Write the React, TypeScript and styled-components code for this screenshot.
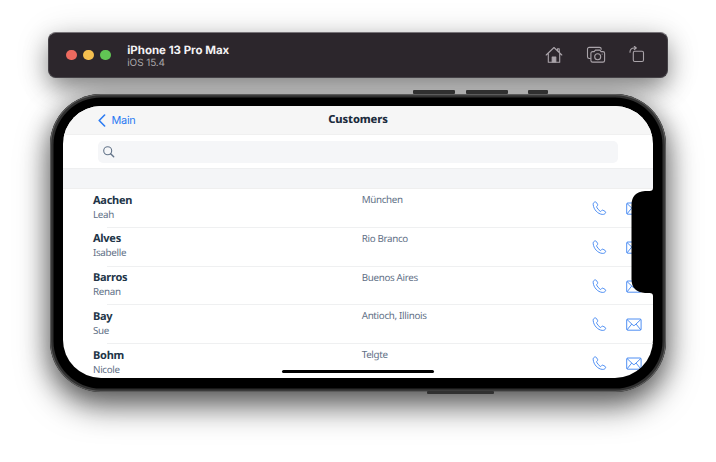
import React from 'react';
import styled, { createGlobalStyle } from 'styled-components';

const GlobalStyle = createGlobalStyle`
  * { box-sizing: border-box; }
  html, body { margin: 0; background: #fff; overflow: hidden; }
`;

const Desktop = styled.main`
  width: 716px;
  height: 462px;
  padding: 32px 48px 0;
  display: flex;
  flex-direction: column;
  align-items: center;
  gap: 15.5px;
  overflow: hidden;
  isolation: isolate;
  background: #fff;
  font-family: "Noto Sans", sans-serif;
  text-rendering: geometricPrecision;
`;

const TitleBar = styled.header`
  position: relative;
  width: 620px;
  height: 46px;
  flex: none;
  display: flex;
  align-items: center;
  padding: 0 22px 0 17px;
  border-radius: 8px;
  background: #2c262c;
  border: 1px solid #454247;
  border-top-color: #777378;
  &::before {
    content: '';
    position: absolute;
    inset: 0;
    z-index: -1;
    border-radius: 8px;
    box-shadow: 0 11px 24px rgba(0, 0, 0, 0.42), 0 4px 36px rgba(0, 0, 0, 0.16);
  }
`;

const Lights = styled.div`
  display: flex;
  gap: 6.6px;
  margin-right: 16.3px;
`;

const Light = styled.span<{ $color: string }>`
  width: 10.6px;
  height: 10.6px;
  border-radius: 50%;
  background: ${(p) => p.$color};
`;

const DeviceTitle = styled.div`
  flex: 1;
  padding-top: 2px;
  font-family: Inter, sans-serif;
`;

const DeviceName = styled.h1`
  margin: 0;
  font-size: 11.5px;
  line-height: 13px;
  font-weight: 700;
  letter-spacing: -0.02px;
  color: #f3f1f3;
`;

const DeviceOs = styled.p`
  margin: 0;
  font-size: 10px;
  line-height: 12px;
  letter-spacing: -0.1px;
  color: #aaa6aa;
`;

const Tools = styled.div`
  display: flex;
  align-items: center;
  gap: 23px;
  color: #aaa4aa;
  svg { display: block; }
`;

const Phone = styled.section`
  position: relative;
  width: 616px;
  height: 298px;
  flex: none;
  padding: 12.5px 13px 13px 13px;
  border-radius: 51px;
  background: #000;
  box-shadow:
    inset 0 0 0 1.2px #5c5c5c,
    inset 0 0 0 3.5px #303030;
  &::before {
    content: '';
    position: absolute;
    inset: 0;
    z-index: -1;
    border-radius: 51px;
    box-shadow: 0 14px 32px rgba(0, 0, 0, 0.58), 0 4px 24px rgba(0, 0, 0, 0.26);
  }
`;

const SideButton = styled.span<{ $left: number; $width: number; $bottom?: boolean }>`
  position: absolute;
  left: ${(p) => p.$left}px;
  ${(p) => (p.$bottom ? 'bottom: -2.8px;' : 'top: -3.2px;')}
  width: ${(p) => p.$width}px;
  height: 3.2px;
  border-radius: 1px;
  background: #303030;
`;

const Screen = styled.div`
  position: relative;
  width: 590px;
  height: 272px;
  overflow: hidden;
  border-radius: 38px;
  background: #fff;
`;

const NavBar = styled.nav`
  height: 29px;
  display: grid;
  grid-template-columns: 1fr auto 1fr;
  align-items: center;
  padding: 0 35px;
  background: #f6f6f6;
  border-bottom: 1px solid #f0f0f0;
`;

const BackLink = styled.a`
  display: flex;
  align-items: center;
  gap: 5.5px;
  font-family: Inter, sans-serif;
  font-size: 10.9px;
  letter-spacing: -0.25px;
  color: #2b7bf3;
`;

const PageTitle = styled.h2`
  margin: 0;
  font-size: 11.1px;
  line-height: 16px;
  padding-top: 0.8px;
  font-weight: 800;
  letter-spacing: -0.12px;
  color: #1d2d3e;
`;

const SearchArea = styled.div`
  height: 34px;
  padding: 5.5px 35px;
  border-bottom: 1px solid #eeeff0;
`;

const SearchField = styled.div`
  height: 22px;
  display: flex;
  align-items: center;
  padding-left: 5px;
  border-radius: 5px;
  background: #f5f6f8;
`;

const SectionGap = styled.div`
  height: 20px;
  background: #f4f5f7;
  border-bottom: 1px solid #efefef;
`;

const List = styled.ul`
  margin: 0;
  padding: 0;
  list-style: none;
`;

const Row = styled.li`
  height: 38.8px;
  display: grid;
  grid-template-columns: 268.7px 230px 34.2px 1fr;
  padding-left: 30px;
  background: linear-gradient(#eff0f1, #eff0f1) 44px 100% / 100% 1px no-repeat;
  svg { margin-top: 12px; display: block; }
`;

const Person = styled.div`
  padding-top: 4.5px;
`;

const LastName = styled.div`
  font-size: 11px;
  line-height: 14px;
  font-weight: 700;
  letter-spacing: -0.27px;
  color: #223548;
`;

const FirstName = styled.div`
  font-size: 9.8px;
  line-height: 13px;
  letter-spacing: -0.32px;
  color: #5f7086;
`;

const City = styled(FirstName)`
  padding-top: 4px;
`;

const Notch = styled.svg`
  position: absolute;
  right: 0;
  top: 81.7px;
`;

const HomeIndicator = styled.span`
  position: absolute;
  left: 219px;
  bottom: 5px;
  width: 152px;
  height: 3.2px;
  border-radius: 2px;
  background: #000;
`;

const HomeIcon = () => (
  <svg width="18" height="18" viewBox="0 0 18 18" fill="none" stroke="currentColor" strokeWidth="1.1" strokeLinecap="round" strokeLinejoin="round">
    <path d="M1.2 9 9 1.5 16.8 9M3.3 7.5v8.7h11.4V7.5M12.5 4.5V2.8h1.7v3.5" />
    <path d="M7.2 16v-5h3.6v5z" fill="currentColor" />
  </svg>
);

const CameraIcon = () => (
  <svg width="20" height="18" viewBox="0 0 20 18" fill="none" stroke="currentColor" strokeWidth="1.1" strokeLinejoin="round">
    <path d="M4.800 12.500H3.200A1.700 1.700 0 0 1 1.500 10.800V3.100a1.700 1.700 0 0 1 1.700-1.700h10.300a1.700 1.700 0 0 1 1.700 1.700v.7" />
    <path d="M6.600 5.600h1.600l1.200-1.500h4.500l1.200 1.500h1.800a1.700 1.700 0 0 1 1.700 1.700v7.100a1.700 1.700 0 0 1-1.700 1.700H6.600a1.700 1.700 0 0 1-1.700-1.700V7.300a1.700 1.700 0 0 1 1.700-1.700Z" />
    <circle cx="11.7" cy="10.7" r="3" />
    <circle cx="16.2" cy="8" r=".55" fill="currentColor" stroke="none" />
  </svg>
);

const RotateIcon = () => (
  <svg width="16" height="18" viewBox="0 0 16 18" fill="none" stroke="currentColor" strokeWidth="1.1" strokeLinejoin="round" strokeLinecap="round">
    <rect x="4.3" y="5.3" width="10.2" height="10.2" rx="1.4" />
    <path d="M1 6.200C.9 3.500 2.500 2 5.100 2H7M5.300.3 7.300 2 5.300 3.700" />
  </svg>
);

const BackIcon = () => (
  <svg width="8" height="13" viewBox="0 0 8 13" fill="none" stroke="currentColor" strokeWidth="1.6" strokeLinecap="round" strokeLinejoin="round">
    <path d="M6.600 1 1.200 6.500l5.400 5.500" />
  </svg>
);

const SearchIcon = () => (
  <svg width="12" height="12" viewBox="0 0 12 12" fill="none" stroke="#64758a" strokeWidth="1.1" strokeLinecap="round">
    <circle cx="4.700" cy="4.800" r="4" />
    <path d="m7.700 7.800 3 3" strokeWidth="1.4" />
  </svg>
);

const PhoneIcon = () => (
  <svg width="15" height="15" viewBox="0 0 15 15" fill="none" stroke="#3b82f2" strokeWidth=".9" strokeLinejoin="round">
    <path d="M3.2.9C1.8 1.1 1 2.2 1.2 3.7c.5 4.9 4.5 9.2 9 9.7 1.6.2 3-.5 3.4-1.7.2-.6 0-1-.5-1.3l-2-1.1c-.5-.3-1-.2-1.4.2l-.6.7c-.3.3-.6.3-1 .1C6.700 9.200 5.400 7.700 4.700 6.200c-.2-.4-.1-.7.200-1l.5-.5c.4-.4.4-.8.2-1.300L4.400 1.500C4.100 1 3.700.8 3.200.9Z" />
  </svg>
);

const MailIcon = () => (
  <svg width="16" height="15" viewBox="0 0 16 15" fill="none" stroke="#3b82f2" strokeWidth=".9" strokeLinejoin="round">
    <rect x=".7" y="2" width="14.4" height="11.2" rx="1" />
    <path d="M1 2.500 7 8.200q.9.800 1.800 0l6-5.700M1 12.900 5.700 7.100M14.800 12.900 10.100 7.100" />
  </svg>
);

const customers = [
  { last: 'Aachen', first: 'Leah', city: 'München' },
  { last: 'Alves', first: 'Isabelle', city: 'Rio Branco' },
  { last: 'Barros', first: 'Renan', city: 'Buenos Aires' },
  { last: 'Bay', first: 'Sue', city: 'Antioch, Illinois' },
  { last: 'Bohm', first: 'Nicole', city: 'Telgte' },
];

export default function App() {
  return (
    <>
      <GlobalStyle />
      <Desktop>
        <TitleBar>
          <Lights>
            <Light $color="#ed6a5f" />
            <Light $color="#f5bf4f" />
            <Light $color="#61c554" />
          </Lights>
          <DeviceTitle>
            <DeviceName>iPhone 13 Pro Max</DeviceName>
            <DeviceOs>iOS 15.4</DeviceOs>
          </DeviceTitle>
          <Tools>
            <HomeIcon />
            <CameraIcon />
            <RotateIcon />
          </Tools>
        </TitleBar>
        <Phone>
          <SideButton $left={362.5} $width={42} />
          <SideButton $left={416} $width={42} />
          <SideButton $left={478} $width={20} />
          <SideButton $left={376.5} $width={67} $bottom />
          <Screen>
            <NavBar>
              <BackLink><BackIcon />Main</BackLink>
              <PageTitle>Customers</PageTitle>
            </NavBar>
            <SearchArea>
              <SearchField><SearchIcon /></SearchField>
            </SearchArea>
            <SectionGap />
            <List>
              {customers.map((c) => (
                <Row key={c.last}>
                  <Person>
                    <LastName>{c.last}</LastName>
                    <FirstName>{c.first}</FirstName>
                  </Person>
                  <City>{c.city}</City>
                  <PhoneIcon />
                  <MailIcon />
                </Row>
              ))}
            </List>
            <Notch width="22" height="108" viewBox="0 0 22 108">
              <path d="M22 0Q22 3 18.500 3H14Q.5 4 .5 17V91Q.5 104 14 105h4.500Q22 105 22 108Z" />
            </Notch>
            <HomeIndicator />
          </Screen>
        </Phone>
      </Desktop>
    </>
  );
}
